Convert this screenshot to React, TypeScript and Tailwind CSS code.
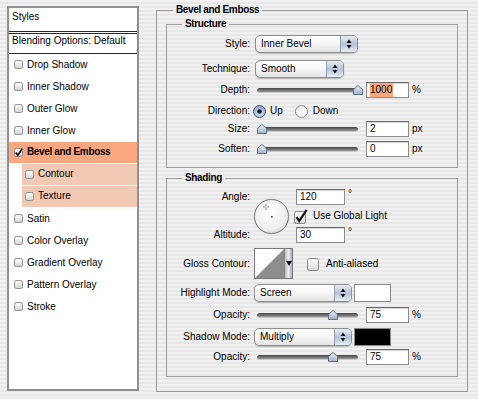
import React from "react";

const pin =
  "bg-[image:repeating-linear-gradient(to_bottom,#f1f1f1_0px,#f1f1f1_2px,#e7e7e7_2px,#e7e7e7_4px)]";

function SmallCheck({ checked }: { checked?: boolean }) {
  return (
    <svg width="9" height="9" viewBox="0 0 9 9" className="shrink-0">
      <defs>
        <linearGradient id="scg" x1="0" y1="0" x2="0" y2="1">
          <stop offset="0" stopColor="#ffffff" />
          <stop offset="1" stopColor="#d4d4d4" />
        </linearGradient>
      </defs>
      <rect x="0.5" y="0.5" width="8" height="8" rx="1.8" fill="url(#scg)" stroke="#8d8d8d" />
      {checked && (
        <path d="M1.8 4.6 L3.8 7.2 L8.2 0.6" stroke="#111" strokeWidth="1.7" fill="none" />
      )}
    </svg>
  );
}

function BigCheck({ checked }: { checked?: boolean }) {
  return (
    <svg width="14" height="15" viewBox="0 0 14 15" className="shrink-0">
      <defs>
        <linearGradient id="bcg" x1="0" y1="0" x2="0" y2="1">
          <stop offset="0" stopColor="#ffffff" />
          <stop offset="1" stopColor="#d9d9d9" />
        </linearGradient>
      </defs>
      <rect x="0.5" y="2.5" width="11" height="12" rx="2" fill="url(#bcg)" stroke="#858585" />
      {checked && (
        <path d="M2.6 8.2 L5.2 12 L12.6 1" stroke="#0d0d0d" strokeWidth="2.2" fill="none" />
      )}
    </svg>
  );
}

function Radio({ on }: { on?: boolean }) {
  return (
    <svg width="13" height="13" viewBox="0 0 13 13" className="shrink-0">
      <defs>
        <radialGradient id="rOn" cx="0.5" cy="0.65" r="0.6">
          <stop offset="0" stopColor="#dfe9f5" />
          <stop offset="1" stopColor="#8fa6c4" />
        </radialGradient>
        <linearGradient id="rOff" x1="0" y1="0" x2="0" y2="1">
          <stop offset="0" stopColor="#f4f4f4" />
          <stop offset="1" stopColor="#ffffff" />
        </linearGradient>
      </defs>
      <circle
        cx="6.5"
        cy="6.5"
        r="6"
        fill={on ? "url(#rOn)" : "url(#rOff)"}
        stroke={on ? "#3e5373" : "#858585"}
      />
      {on && <circle cx="6.5" cy="6.5" r="2.3" fill="#111a2a" />}
    </svg>
  );
}

function Popup({ w, label }: { w: string; label: string }) {
  return (
    <div
      className={`${w} flex h-[18px] shrink-0 overflow-hidden rounded-[5px] border border-[#8e8e8e] bg-gradient-to-b from-white via-[#f6f6f6] to-[#e2e2e2] shadow-[0_1px_1px_rgba(0,0,0,0.22)]`}
    >
      <div className="flex flex-1 items-center pl-[5px] leading-[14px]">{label}</div>
      <div className="flex w-[17px] items-center justify-center border-l border-[#8f9cae] bg-gradient-to-b from-[#e8eef6] via-[#b6c4d7] to-[#e6edf5]">
        <svg width="6" height="10" viewBox="0 0 6 10">
          <path d="M3 0.5 L5.6 4 L0.4 4 Z" fill="#111" />
          <path d="M3 9.5 L5.6 6 L0.4 6 Z" fill="#111" />
        </svg>
      </div>
    </div>
  );
}

function Slider({ left }: { left: string }) {
  return (
    <div className="relative flex h-[18px] w-[101px] shrink-0 items-center">
      <div className="h-[5px] w-full rounded-full border-b border-[#c8c8c8] bg-gradient-to-b from-[#444] to-[#999]" />
      <svg
        width="10"
        height="10"
        viewBox="0 0 10 10"
        className={`absolute top-[4px] ${left}`}
      >
        <defs>
          <linearGradient id="thg" x1="0" y1="0" x2="0" y2="1">
            <stop offset="0" stopColor="#eef3f9" />
            <stop offset="1" stopColor="#9fb0c6" />
          </linearGradient>
        </defs>
        <path d="M5 0.5 L9.5 4.5 L9.5 9.5 L0.5 9.5 L0.5 4.5 Z" fill="url(#thg)" stroke="#5f6f86" />
      </svg>
    </div>
  );
}

function Field({ w, children }: { w: string; children: React.ReactNode }) {
  return (
    <div
      className={`${w} flex h-[16px] shrink-0 items-center border border-[#8c8c8c] border-t-[#6a6a6a] bg-white pl-[3px] leading-[14px] shadow-[inset_0_1px_1px_rgba(0,0,0,0.18)]`}
    >
      {children}
    </div>
  );
}

function Label({ children }: { children: React.ReactNode }) {
  return <div className="w-[83px] shrink-0 text-right leading-[14px]">{children}</div>;
}

function Dial() {
  return (
    <svg width="37" height="37" viewBox="0 0 37 37" className="shrink-0">
      <defs>
        <radialGradient id="dg" cx="0.45" cy="0.4" r="0.65">
          <stop offset="0" stopColor="#ffffff" />
          <stop offset="0.75" stopColor="#ededed" />
          <stop offset="1" stopColor="#d2d2d2" />
        </radialGradient>
      </defs>
      <circle cx="18.5" cy="18.5" r="17.8" fill="#c9c9c9" />
      <circle cx="18.5" cy="18.5" r="17" fill="url(#dg)" stroke="#7e7e7e" />
      <path d="M13 6 V12 M10 9 H16" stroke="#8a8a8a" strokeWidth="1.6" />
      <path d="M13 6.5 V11.5 M10.5 9 H15.5" stroke="#ffffff" strokeWidth="0.8" />
      <rect x="18" y="18" width="1.6" height="1.6" fill="#555" />
    </svg>
  );
}

function Contour() {
  return (
    <div className="flex h-[31px] w-[39px] shrink-0 border border-[#7a7a7a] bg-white">
      <svg width="29" height="29" viewBox="0 0 29 29">
        <rect width="29" height="29" fill="#ffffff" />
        <path d="M0 29 L29 0 L29 29 Z" fill="#8d8d8d" />
      </svg>
      <div className="flex flex-1 items-center justify-center border-l border-[#8a8a8a] bg-gradient-to-r from-[#aeb9c8] via-[#eef2f7] to-[#9eabbd]">
        <svg width="6" height="5" viewBox="0 0 6 5">
          <path d="M0 0 H6 L3 5 Z" fill="#111" />
        </svg>
      </div>
    </div>
  );
}

function StyleItem({
  label,
  checked,
  bold,
  variant,
}: {
  label: string;
  checked?: boolean;
  bold?: boolean;
  variant?: "sel" | "sub";
}) {
  if (variant === "sub") {
    return (
      <div className="flex h-[22px] pl-[13px]">
        <div className="flex flex-1 items-center gap-[4px] border-b border-white bg-[#f2c9b4] pb-[1px] pl-[3px]">
          <SmallCheck />
          <span className="leading-[14px]">{label}</span>
        </div>
      </div>
    );
  }
  return (
    <div
      className={`flex h-[22px] items-center gap-[4px] pb-[1px] pl-[5px] ${
        variant === "sel" ? "border-b border-white bg-[#f9a77f]" : ""
      }`}
    >
      <SmallCheck checked={checked} />
      <span className={`leading-[14px] ${bold ? "font-bold tracking-[-0.35px]" : ""}`}>{label}</span>
    </div>
  );
}

const legendCls = "px-[3px] font-bold leading-[14px] tracking-[-0.35px]";

export default function App() {
  return (
    <div
      className={`flex h-[399px] w-[478px] items-start overflow-hidden pl-[7px] pt-[3px] text-[10px] text-black ${pin} font-['Liberation_Sans',Arial,sans-serif]`}
    >
      {/* Left styles list */}
      <div className="mt-[3px] flex h-[385px] w-[132px] shrink-0 flex-col border-2 border-[#8f8f8f] bg-white">
        <div className="h-[23px] pl-[3px] pt-[2px] leading-[14px]">Styles</div>
        <div className="h-[3px] border-y border-[#262626]" />
        <div className="h-[20px] border-b border-[#262626] pl-[3px] leading-[14px]">
          Blending Options: Default
        </div>
        <StyleItem label="Drop Shadow" />
        <StyleItem label="Inner Shadow" />
        <StyleItem label="Outer Glow" />
        <StyleItem label="Inner Glow" />
        <StyleItem label="Bevel and Emboss" checked bold variant="sel" />
        <StyleItem label="Contour" variant="sub" />
        <StyleItem label="Texture" variant="sub" />
        <StyleItem label="Satin" />
        <StyleItem label="Color Overlay" />
        <StyleItem label="Gradient Overlay" />
        <StyleItem label="Pattern Overlay" />
        <StyleItem label="Stroke" />
      </div>

      {/* Right panel */}
      <fieldset className="ml-[17px] h-[389px] w-[312px] shrink-0 border border-[#9a9a9a]">
        <legend className={`ml-[16px] ${legendCls}`}>Bevel and Emboss</legend>

        <fieldset className="mx-[9px] border border-[#a0a0a0] pb-[9px]">
          <legend className={`ml-[15px] ${legendCls}`}>Structure</legend>

          <div className="mt-[4px] flex h-[18px] items-center">
            <Label>Style:</Label>
            <div className="ml-[5px]">
              <Popup w="w-[103px]" label="Inner Bevel" />
            </div>
          </div>

          <div className="mt-[7px] flex h-[18px] items-center">
            <Label>Technique:</Label>
            <div className="ml-[5px]">
              <Popup w="w-[89px]" label="Smooth" />
            </div>
          </div>

          <div className="mt-[3px] flex h-[18px] items-center">
            <Label>Depth:</Label>
            <div className="ml-[7px]">
              <Slider left="left-[96px]" />
            </div>
            <div className="ml-[8px]">
              <Field w="w-[43px]">
                <span className="bg-[#f9a77f] pr-[1px]">1000</span>
              </Field>
            </div>
            <span className="ml-[3px] leading-[14px]">%</span>
          </div>

          <div className="mt-[3px] flex h-[18px] items-center">
            <Label>Direction:</Label>
            <div className="ml-[3px]">
              <Radio on />
            </div>
            <span className="ml-[4px] leading-[14px]">Up</span>
            <div className="ml-[12px]">
              <Radio />
            </div>
            <span className="ml-[5px] leading-[14px]">Down</span>
          </div>

          <div className="flex h-[18px] items-center">
            <Label>Size:</Label>
            <div className="ml-[7px]">
              <Slider left="left-[0px]" />
            </div>
            <div className="ml-[8px]">
              <Field w="w-[43px]">2</Field>
            </div>
            <span className="ml-[3px] leading-[14px]">px</span>
          </div>

          <div className="mt-[2px] flex h-[18px] items-center">
            <Label>Soften:</Label>
            <div className="ml-[7px]">
              <Slider left="left-[0px]" />
            </div>
            <div className="ml-[8px]">
              <Field w="w-[43px]">0</Field>
            </div>
            <span className="ml-[3px] leading-[14px]">px</span>
          </div>
        </fieldset>

        <fieldset className="mx-[9px] mt-[3px] border border-[#a0a0a0] pb-[10px]">
          <legend className={`ml-[15px] ${legendCls}`}>Shading</legend>

          <div className="mt-[4px] flex items-start">
            <div className="flex w-[83px] shrink-0 flex-col text-right">
              <div className="h-[16px] leading-[16px]">Angle:</div>
              <div className="mt-[22px] h-[16px] leading-[16px]">Altitude:</div>
            </div>
            <div className="ml-[3px] mt-[9px]">
              <Dial />
            </div>
            <div className="ml-[6px] flex flex-col">
              <div className="flex items-start">
                <Field w="w-[49px]">120</Field>
                <span className="ml-[3px] leading-[10px]">°</span>
              </div>
              <div className="ml-[-2px] mt-[3px] flex h-[16px] items-center">
                <BigCheck checked />
                <span className="ml-[5px] leading-[14px]">Use Global Light</span>
              </div>
              <div className="mt-[3px] flex items-start">
                <Field w="w-[49px]">30</Field>
                <span className="ml-[3px] leading-[10px]">°</span>
              </div>
            </div>
          </div>

          <div className="mt-[5px] flex h-[31px] items-center">
            <Label>Gloss Contour:</Label>
            <div className="ml-[4px]">
              <Contour />
            </div>
            <div className="ml-[14px]">
              <BigCheck />
            </div>
            <span className="ml-[5px] leading-[14px]">Anti-aliased</span>
          </div>

          <div className="mt-[5px] flex h-[18px] items-center">
            <Label>Highlight Mode:</Label>
            <div className="ml-[4px]">
              <Popup w="w-[98px]" label="Screen" />
            </div>
            <div className="ml-[2px] h-[18px] w-[37px] border border-[#8a8a8a] bg-white" />
          </div>

          <div className="mt-[4px] flex h-[18px] items-center">
            <Label>Opacity:</Label>
            <div className="ml-[7px]">
              <Slider left="left-[71px]" />
            </div>
            <div className="ml-[8px]">
              <Field w="w-[43px]">75</Field>
            </div>
            <span className="ml-[3px] leading-[14px]">%</span>
          </div>

          <div className="mt-[4px] flex h-[18px] items-center">
            <Label>Shadow Mode:</Label>
            <div className="ml-[4px]">
              <Popup w="w-[98px]" label="Multiply" />
            </div>
            <div className="ml-[2px] h-[18px] w-[37px] border border-[#8a8a8a] bg-black" />
          </div>

          <div className="mt-[2px] flex h-[18px] items-center">
            <Label>Opacity:</Label>
            <div className="ml-[7px]">
              <Slider left="left-[71px]" />
            </div>
            <div className="ml-[8px]">
              <Field w="w-[43px]">75</Field>
            </div>
            <span className="ml-[3px] leading-[14px]">%</span>
          </div>
        </fieldset>
      </fieldset>
    </div>
  );
}
